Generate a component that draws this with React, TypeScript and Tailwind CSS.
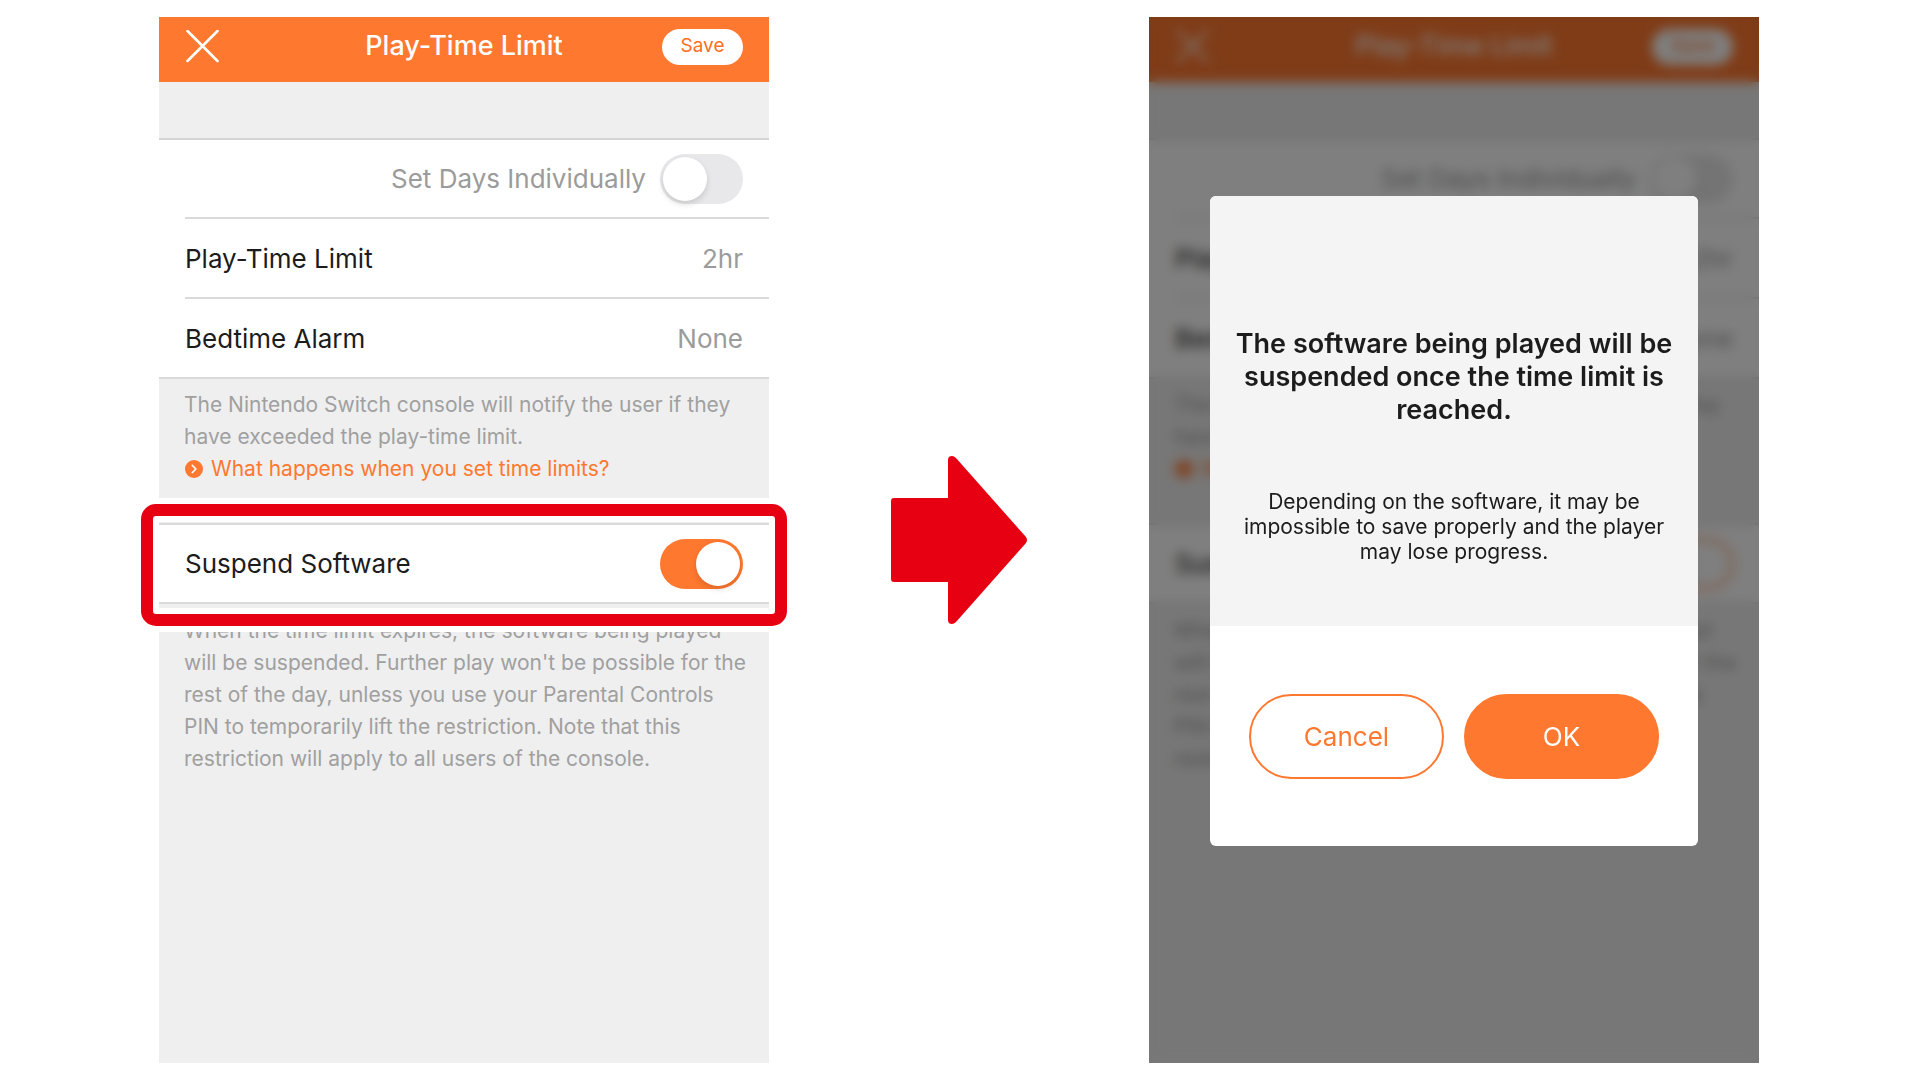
import type { ReactNode } from "react";

type SwitchProps = { label: string; checked?: boolean; outlined?: boolean };

function Switch({ label, checked = false, outlined = false }: SwitchProps) {
  return (
    <label className="relative block h-[50px] w-[83px] shrink-0">
      <input type="checkbox" role="switch" defaultChecked={checked} aria-label={label} className="peer sr-only" />
      <span
        className={
          outlined
            ? "block h-full rounded-full border-2 border-[#ff782f] bg-white peer-checked:bg-[#ff782f]"
            : "block h-full rounded-full bg-[#e8e8ea] peer-checked:bg-[#ff782f]"
        }
      />
      <span className="absolute top-[3px] left-[3px] h-11 w-11 rounded-full bg-white shadow-[0_3px_6px_rgba(0,0,0,0.14)] peer-checked:right-[3px] peer-checked:left-auto" />
    </label>
  );
}

function Row({ label, value }: { label: string; value: string }) {
  return (
    <div className="ml-[26px] flex h-20 items-center justify-between border-b-2 border-[#dadada] pr-[26px] text-[26px] last:ml-0 last:pl-[26px]">
      <span className="text-[#1c1c1c]">{label}</span>
      <span className="text-[#9b9b9b]">{value}</span>
    </div>
  );
}

function Note({ children, className }: { children: ReactNode; className: string }) {
  return (
    <div className={className}>
      <div className="pl-[25px] text-[21px] leading-8 whitespace-nowrap text-[#a0a0a0]">{children}</div>
    </div>
  );
}

function SettingsScreen({ suspend, highlight }: { suspend: boolean; highlight: boolean }) {
  return (
    <div className="h-full bg-[#efefef]">
      <header className="grid h-[65px] grid-cols-[1fr_auto_1fr] items-center bg-[#ff782f] px-[26px] pb-1.5">
        <button type="button" aria-label="Close" className="ml-px h-[33px] w-[33px]">
          <svg viewBox="0 0 33 33" className="h-full w-full" fill="none" stroke="#fff" strokeWidth="2.6" strokeLinecap="round">
            <path d="M1.5 1 31.5 31M31.5 1 1.5 31" />
          </svg>
        </button>
        <h1 className="text-[27px] font-medium text-white">Play-Time Limit</h1>
        <button type="button" className="h-9 w-[81px] justify-self-end rounded-full bg-white text-[19px] text-[#ff6f22]">
          Save
        </button>
      </header>

      <section className="mt-14 border-t-2 border-[#d4d4d4] bg-white">
        <div className="ml-[26px] flex h-[79px] items-center justify-end gap-3.5 border-b-2 border-[#dadada] pr-[26px] text-[26px] text-[#9b9b9b]">
          Set Days Individually
          <Switch label="Set Days Individually" />
        </div>
        <Row label="Play-Time Limit" value="2hr" />
        <Row label="Bedtime Alarm" value="None" />
      </section>

      <Note className="pt-2.5 pb-[38px]">
        <p>
          The Nintendo Switch console will notify the user if they
          <br />
          have exceeded the play-time limit.
        </p>
        <a href="#limits" className="flex items-center gap-2 pl-px text-[#ff782f]">
          <svg viewBox="0 0 18 18" className="h-[18px] w-[18px]" fill="none">
            <circle cx="9" cy="9" r="9" fill="#ff782f" />
            <path d="m7.3 5.4 3.6 3.6-3.6 3.6" stroke="#fff" strokeWidth="1.6" strokeLinecap="round" strokeLinejoin="round" />
          </svg>
          What happens when you set time limits?
        </a>
      </Note>

      <section className="relative flex h-[81px] items-center justify-between border-y-2 border-[#dadada] bg-white px-[26px] text-[26px] text-[#1c1c1c]">
        Suspend Software
        <Switch label="Suspend Software" checked={suspend} outlined={!suspend} />
        {highlight && (
          <div className="pointer-events-none absolute -inset-x-[18px] -top-[21px] -bottom-6 rounded-[15px] border-12 border-[#e70012] shadow-[0_0_0_6px_#fff,inset_0_0_0_6px_#fff]" />
        )}
      </section>

      <Note className="pt-[11px]">
        <p>
          When the time limit expires, the software being played
          <br />
          will be suspended. Further play won't be possible for the
          <br />
          rest of the day, unless you use your Parental Controls
          <br />
          PIN to temporarily lift the restriction. Note that this
          <br />
          restriction will apply to all users of the console.
        </p>
      </Note>
    </div>
  );
}

function ConfirmDialog() {
  return (
    <div role="dialog" aria-labelledby="confirm-title" className="w-full overflow-hidden rounded-md bg-white">
      <div className="bg-[#f4f4f4] pt-[131px] pb-[62px] text-center whitespace-nowrap text-[#1c1c1c]">
        <h2 id="confirm-title" className="text-[27px] leading-[33px] font-semibold">
          The software being played will be
          <br />
          suspended once the time limit is
          <br />
          reached.
        </h2>
        <p className="mt-[63px] text-[21px] leading-[25px]">
          Depending on the software, it may be
          <br />
          impossible to save properly and the player
          <br />
          may lose progress.
        </p>
      </div>
      <div className="flex gap-5 px-[39px] pt-[68px] pb-[67px] text-[26px]">
        <button type="button" className="h-[85px] flex-1 rounded-full border-2 border-[#ff782f] text-[#ff782f]">
          Cancel
        </button>
        <button type="button" className="h-[85px] flex-1 rounded-full border-2 border-[#ff782f] bg-[#ff782f] text-white">
          OK
        </button>
      </div>
    </div>
  );
}

export default function App() {
  return (
    <main className="grid min-h-screen grid-cols-[minmax(0,1fr)_136px_minmax(0,1fr)] gap-[122px] bg-white py-[17px] pr-[161px] pl-[159px] font-['Inter',sans-serif]">
      <div>
        <SettingsScreen suspend highlight />
      </div>

      <svg viewBox="0 0 136 168" className="w-full self-center" aria-hidden="true">
        <path
          d="M3 42H57V4Q57 0 61 0Q63 0 65 2L135 81Q137 84 135 87L65 166Q63 168 61 168Q57 168 57 164V126H3Q0 126 0 123V45Q0 42 3 42Z"
          fill="#e70012"
        />
      </svg>

      <div className="relative overflow-hidden">
        <div inert className="h-full">
          <SettingsScreen suspend={false} highlight={false} />
        </div>
        <div className="absolute inset-0 bg-black/50 px-[61px] pt-[179px] backdrop-blur-[6px]">
          <ConfirmDialog />
        </div>
      </div>
    </main>
  );
}
